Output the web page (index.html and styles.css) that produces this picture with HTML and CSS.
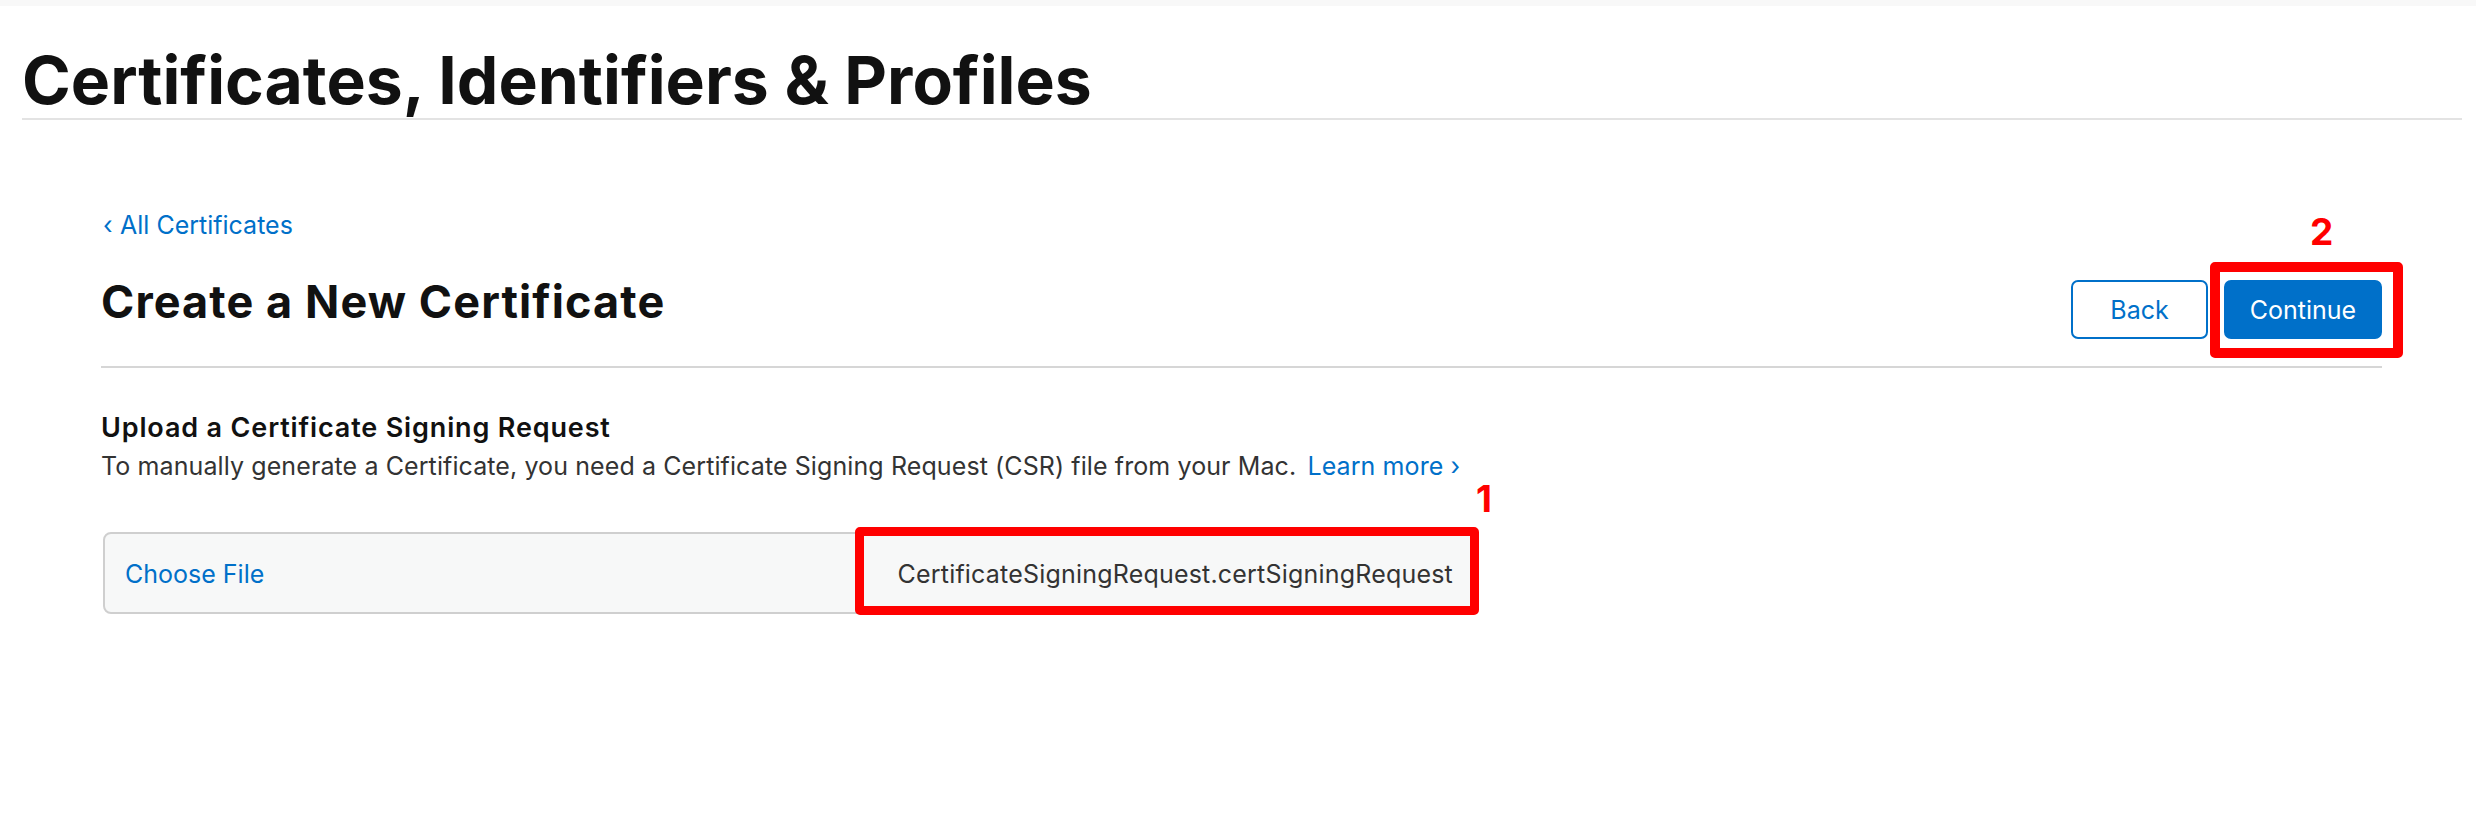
FILE: index.html
```html
<!DOCTYPE html>
<html lang="en">
<head>
<meta charset="utf-8">
<title>Certificates, Identifiers &amp; Profiles</title>
<link rel="stylesheet" href="styles.css">
</head>
<body>
<div class="topbar"></div>
<header class="page-header">
  <h1 class="page-title">Certificates, Identifiers &amp; Profiles</h1>
</header>
<main class="content">
  <a class="back-link" href="#"><span class="chev">‹</span>All Certificates</a>
  <div class="title-row">
    <h2 class="section-title">Create a New Certificate</h2>
    <div class="actions">
      <button class="btn btn-outline" type="button">Back</button>
      <div class="annotated">
        <button class="btn btn-primary" type="button">Continue</button>
        <span class="mark mark-2"></span>
        <span class="mark-label label-2">2</span>
      </div>
    </div>
  </div>
  <section class="upload">
    <h3 class="upload-title">Upload a Certificate Signing Request</h3>
    <p class="upload-desc">To manually generate a Certificate, you need a Certificate Signing Request (CSR) file from your Mac. <a class="more-link" href="#">Learn more ›</a></p>
    <div class="file-field">
      <span class="choose">Choose File</span>
      <span class="file-name">CertificateSigningRequest.certSigningRequest</span>
      <span class="mark mark-1"></span>
      <span class="mark-label label-1">1</span>
    </div>
  </section>
</main>
</body>
</html>
```
FILE: styles.css
```css
* { box-sizing: border-box; }

html, body {
  margin: 0;
  padding: 0;
  background: #fff;
}

body {
  font-family: "Inter", "Liberation Sans", Arial, sans-serif;
  color: #111;
  width: 2476px;
  height: 816px;
  overflow: hidden;
}

.topbar {
  height: 6px;
  background: #f8f8f8;
}

.page-header {
  margin: 0 14px 0 22px;
  padding-top: 36px;
  border-bottom: 2px solid #e3e3e3;
}

.page-title {
  margin: 0;
  font-size: 66px;
  line-height: 76px;
  font-weight: 700;
  letter-spacing: 0;
  color: #111;
}

.content {
  margin: 0 94px 0 101px;
  padding-top: 90px;
}

.back-link {
  display: block;
  font-size: 25px;
  line-height: 30px;
  color: #0070c9;
  text-decoration: none;
  letter-spacing: 0;
}

.back-link .chev {
  display: inline-block;
  width: 19px;
  padding-left: 2px;
}

.title-row {
  display: flex;
  justify-content: space-between;
  align-items: flex-start;
  margin-top: 34px;
  padding-bottom: 27px;
  border-bottom: 2px solid #d6d6d6;
}

.section-title {
  margin: 0;
  font-size: 45px;
  line-height: 56px;
  font-weight: 700;
  letter-spacing: 1.1px;
  color: #111;
}

.actions {
  display: flex;
  gap: 16px;
  margin-top: 6px;
}

.btn {
  height: 59px;
  padding: 0;
  font-family: inherit;
  font-size: 25px;
  border-radius: 7px;
  border: 2px solid #0070c9;
  cursor: pointer;
  letter-spacing: 0;
}

.btn-outline {
  width: 137px;
  background: #fff;
  color: #0070c9;
}

.btn-primary {
  width: 158px;
  background: #0070c9;
  color: #fff;
}

.annotated {
  position: relative;
  display: flex;
}

.mark {
  position: absolute;
  border: 9px solid #ff0000;
  border-radius: 5px;
  pointer-events: none;
}

.mark-2 {
  left: -14px;
  right: -21px;
  top: -18px;
  bottom: -19px;
  border-width: 10px;
}

.mark-label {
  position: absolute;
  font-size: 37px;
  line-height: 37px;
  font-weight: 700;
  color: #ff0000;
}

.label-2 {
  left: 86px;
  top: -67px;
}

.upload {
  margin-top: 44px;
}

.upload-title {
  margin: 0;
  font-size: 27px;
  line-height: 32px;
  font-weight: 600;
  letter-spacing: 0.85px;
  color: #111;
}

.upload-desc {
  margin: 6px 0 0;
  font-size: 25px;
  line-height: 32px;
  color: #333;
  letter-spacing: 0.1px;
}

.more-link {
  color: #0070c9;
  text-decoration: none;
  margin-left: 4px;
}

.file-field {
  position: relative;
  display: flex;
  align-items: center;
  justify-content: space-between;
  width: 1372px;
  height: 82px;
  margin-top: 50px;
  margin-left: 2px;
  padding: 2px 20px 0 20px;
  background: #f7f8f8;
  border: 2px solid #cfcfcf;
  border-radius: 8px;
  font-size: 25px;
  line-height: 30px;
  letter-spacing: 0.2px;
}

.choose {
  color: #0070c9;
  letter-spacing: 0;
}

.file-name {
  color: #333;
}

.mark-1 {
  left: 750px;
  right: -6px;
  top: -7px;
  bottom: -3px;
}

.label-1 {
  left: 1371px;
  top: -54px;
}
```
